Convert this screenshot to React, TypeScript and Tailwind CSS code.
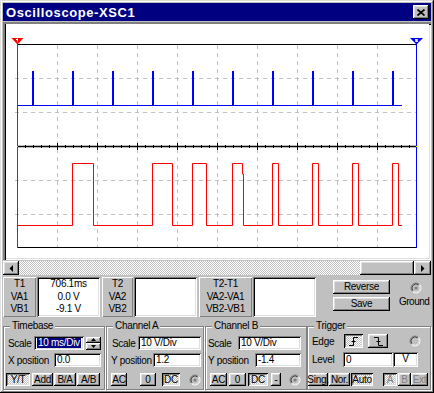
import React from "react";

const raised =
  "bg-[#c0c0c0] shadow-[inset_-1px_-1px_#000,inset_1px_1px_#fff,inset_-2px_-2px_#808080,inset_2px_2px_#dfdfdf]";
const pressed =
  "bg-[image:repeating-conic-gradient(#fff_0_25%,#c0c0c0_0_50%)] bg-[length:2px_2px] shadow-[inset_1px_1px_#000,inset_-1px_-1px_#fff,inset_2px_2px_#808080,inset_-2px_-2px_#dfdfdf]";
const field =
  "bg-white shadow-[inset_1px_1px_#808080,inset_-1px_-1px_#fff,inset_2px_2px_#000,inset_-2px_-2px_#dfdfdf]";
const labelBox =
  "bg-[#c0c0c0] shadow-[inset_1px_1px_#fff,inset_-1px_-1px_#808080]";

const vGrid = [57, 97, 137, 177, 217, 257, 297, 337, 377];
const hGrid = [78, 112, 180, 214];
const ticks = Array.from({ length: 49 }, (_, i) => 25 + i * 8);
const spikes = Array.from({ length: 10 }, (_, i) => 32 + i * 40);
const redTrace =
  "M17 225.5H72.5V163.5H93.5V225.5H152.5V163.5H172.5V225.5H192.5V163.5H206.5V225.5H232.5V163.5H242.5V174H243.5V225.5H272.5V163.5H278.5V225.5H312.5V163.5H318.5V225.5H352.5V163.5H358.5V225.5H392.5V163.5H398.5V225.5H402";

function Btn({
  label,
  className = "",
  on = false,
  dim = false,
}: {
  label: React.ReactNode;
  className?: string;
  on?: boolean;
  dim?: boolean;
}) {
  return (
    <button
      type="button"
      className={`h-[13px] shrink-0 flex items-center justify-center leading-none ${
        on ? pressed : raised
      } ${dim ? "text-[#808080]" : "text-black"} ${className}`}
    >
      {label}
    </button>
  );
}

function Radio({ dot = true }: { dot?: boolean }) {
  return (
    <svg width="12" height="12" viewBox="0 0 12 12" className="block shrink-0">
      <circle cx="6" cy="6" r="5" fill="#c0c0c0" />
      <path d="M2.46 9.54A5 5 0 0 1 9.54 2.46" fill="none" stroke="#808080" />
      <path d="M9.54 2.46A5 5 0 0 1 2.46 9.54" fill="none" stroke="#fff" />
      <path d="M3.17 8.83A4 4 0 0 1 8.83 3.17" fill="none" stroke="#404040" />
      <path d="M8.83 3.17A4 4 0 0 1 3.17 8.83" fill="none" stroke="#dfdfdf" />
      {dot && <circle cx="6" cy="6" r="1.6" fill="#808080" />}
    </svg>
  );
}

function Field({
  value,
  className = "",
  selected = false,
}: {
  value: string;
  className?: string;
  selected?: boolean;
}) {
  return (
    <div className={`h-[14px] shrink-0 flex items-center pl-[3px] ${field} ${className}`}>
      {selected ? (
        <span className="bg-[#000080] text-white px-[1px] leading-[10px]">{value}</span>
      ) : (
        <span className="leading-none">{value}</span>
      )}
    </div>
  );
}

function Measure({ lines, className }: { lines: string[]; className: string }) {
  return (
    <div className={`h-full shrink-0 flex flex-col items-center pt-[1px] ${labelBox} ${className}`}>
      {lines.map((l) => (
        <span key={l} className="leading-[12.5px]">
          {l}
        </span>
      ))}
    </div>
  );
}

function Value({ lines = [], className }: { lines?: string[]; className: string }) {
  return (
    <div className={`h-full shrink-0 flex flex-col items-center pt-[1px] ${field} ${className}`}>
      {lines.map((l) => (
        <span key={l} className="leading-[12.5px]">
          {l}
        </span>
      ))}
    </div>
  );
}

function Group({
  title,
  className,
  children,
}: {
  title: string;
  className: string;
  children: React.ReactNode;
}) {
  return (
    <fieldset
      className={`h-[71px] shrink-0 border border-[#808080] shadow-[1px_1px_0_#fff,inset_1px_1px_0_#fff] ${className}`}
    >
      <legend className="ml-[6px] px-[2px] leading-[14px] bg-[#c0c0c0]">{title}</legend>
      {children}
    </fieldset>
  );
}

function Scope() {
  return (
    <svg width="423" height="234" viewBox="6 24 423 234" className="block">
      <rect x="6" y="24" width="423" height="234" fill="#fff" />
      {vGrid.map((x) => (
        <line key={x} x1={x + 0.5} y1={45} x2={x + 0.5} y2={247} stroke="#c0c0c0" strokeDasharray="4 4" />
      ))}
      {hGrid.map((y) => (
        <line key={y} x1={15} y1={y + 0.5} x2={417} y2={y + 0.5} stroke="#c0c0c0" strokeDasharray="4 4" />
      ))}
      <line x1="17" y1="44.5" x2="416" y2="44.5" stroke="#000" />
      <line x1="17" y1="247.5" x2="416" y2="247.5" stroke="#000" />
      <line x1="17" y1="146.5" x2="416" y2="146.5" stroke="#000" strokeWidth="1.4" />
      {ticks.map((x) => {
        const major = (x - 17) % 40 === 0;
        return (
          <line
            key={x}
            x1={x + 0.5}
            y1={major ? 143 : 145}
            x2={x + 0.5}
            y2={major ? 150 : 148}
            stroke="#000"
          />
        );
      })}
      {/* channel A */}
      <line x1="17" y1="105.5" x2="402" y2="105.5" stroke="#0000ff" />
      {spikes.map((x) => (
        <rect key={x} x={x} y={71} width="2" height="34" fill="#0000ff" />
      ))}
      {/* channel B */}
      <path d={redTrace} fill="none" stroke="#ff0000" />
      {/* cursors */}
      <line x1="17.5" y1="38" x2="17.5" y2="248" stroke="#ff0000" />
      <polygon points="11.5,38 23.5,38 17.5,44.5" fill="#ff0000" />
      <rect x="17" y="38.5" width="1" height="3" fill="#fff" />
      <rect x="16" y="39" width="1" height="1" fill="#fff" />
      <line x1="416.5" y1="38" x2="416.5" y2="248" stroke="#0000ff" />
      <polygon points="410,38 423,38 416.5,44.5" fill="#0000ff" />
      <path d="M415 39.5H417.5V40.5H415.5V41.5H418" fill="none" stroke="#fff" strokeWidth="0.9" />
      <rect x="416" y="146" width="1" height="1" fill="#ffff00" />
      <rect x="17" y="146" width="1" height="1" fill="#00ffff" />
    </svg>
  );
}

export default function App() {
  return (
    <div className="w-[434px] h-[393px] bg-[#c0c0c0] p-[3px] flex flex-col text-[10px] tracking-[-0.3px] text-black font-['Liberation_Sans',Arial,sans-serif] shadow-[inset_-1px_-1px_#000,inset_1px_1px_#dfdfdf,inset_-2px_-2px_#808080,inset_2px_2px_#fff] overflow-hidden">
      {/* title bar */}
      <div className="h-[18px] shrink-0 bg-[#000080] flex items-center justify-between pl-[3px] pr-[2px]">
        <span className="text-white font-bold text-[13px] tracking-[0.6px] leading-none">
          Oscilloscope-XSC1
        </span>
        <button type="button" className={`w-[16px] h-[14px] flex items-center justify-center ${raised}`}>
          <svg width="8" height="7" viewBox="0 0 8 7">
            <path d="M0.5 0.5L7.5 6.5M7.5 0.5L0.5 6.5" stroke="#000" strokeWidth="1.7" />
          </svg>
        </button>
      </div>

      {/* screen */}
      <div className="mt-[1px] h-[238px] shrink-0 pl-[3px] pt-[2px] pr-[2px] pb-[2px] bg-white shadow-[inset_1px_1px_#808080,inset_2px_2px_#808080,inset_3px_3px_#000,inset_-1px_-1px_#fff,inset_-2px_-2px_#dfdfdf]">
        <Scope />
      </div>

      {/* scroll bar */}
      <div className="mt-[1px] h-[14px] shrink-0 flex">
        <div className={`w-[16px] h-full flex items-center justify-center ${raised}`}>
          <svg width="4" height="7" viewBox="0 0 4 7">
            <path d="M4 0V7L0.5 3.5Z" fill="#000" />
          </svg>
        </div>
        <div className="flex-1 bg-[image:repeating-conic-gradient(#fff_0_25%,#c0c0c0_0_50%)] bg-[length:2px_2px]" />
        <div className={`w-[54px] h-full ${raised}`} />
        <div className={`w-[17px] h-full flex items-center justify-center ${raised}`}>
          <svg width="4" height="7" viewBox="0 0 4 7">
            <path d="M0 0V7L3.5 3.5Z" fill="#000" />
          </svg>
        </div>
      </div>

      {/* readouts */}
      <div className="mt-[2px] h-[40px] shrink-0 flex">
        <Measure lines={["T1", "VA1", "VB1"]} className="w-[33px]" />
        <Value lines={["706.1ms", "0.0 V", "-9.1 V"]} className="w-[63px] ml-[1px]" />
        <Measure lines={["T2", "VA2", "VB2"]} className="w-[31px] ml-[2px]" />
        <Value className="w-[63px] ml-[1px]" />
        <Measure lines={["T2-T1", "VA2-VA1", "VB2-VB1"]} className="w-[53px] ml-[2px]" />
        <Value className="w-[63px] ml-[1px]" />
        <div className="w-[57px] ml-[17px] flex flex-col pt-[3px] gap-[3px]">
          <Btn label="Reverse" className="h-[14px] w-full" />
          <Btn label="Save" className="h-[14px] w-full" />
        </div>
        <div className="flex flex-col items-start ml-[4px] pt-[5px]">
          <div className="ml-[16px]">
            <Radio />
          </div>
          <span className="ml-[5px] mt-[2px] leading-[12px] tracking-[-0.5px]">Ground</span>
        </div>
      </div>

      {/* controls */}
      <div className="mt-[2px] flex">
        <Group title="Timebase" className="w-[102px]">
          <div className="flex flex-col pl-[4px] pr-[3px] pt-[3px]">
            <div className="h-[14px] flex items-center justify-between">
              <span>Scale</span>
              <div className="flex items-center">
                <Field value="10 ms/Div" selected className="w-[50px]" />
                <div className="ml-[2px] w-[15px] h-[13px] flex flex-col">
                  <div className={`h-[6.5px] flex items-center justify-center ${raised}`}>
                    <svg width="5" height="3" viewBox="0 0 5 3">
                      <path d="M0 3H5L2.5 0Z" fill="#000" />
                    </svg>
                  </div>
                  <div className={`h-[6.5px] flex items-center justify-center ${raised}`}>
                    <svg width="5" height="3" viewBox="0 0 5 3">
                      <path d="M0 0H5L2.5 3Z" fill="#000" />
                    </svg>
                  </div>
                </div>
              </div>
            </div>
            <div className="mt-[3px] h-[14px] flex items-center justify-between">
              <span>X position</span>
              <Field value="0.0" className="w-[47px]" />
            </div>
          </div>
          <div className="mt-[6px] flex pl-[2px]">
            <Btn label="Y/T" on className="w-[24px]" />
            <Btn label="Add" className="w-[21px] ml-[2px]" />
            <Btn label="B/A" className="w-[22px] ml-[1px]" />
            <Btn label="A/B" className="w-[23px] ml-[1px]" />
          </div>
        </Group>

        <Group title="Channel A" className="w-[98px] ml-[1px]">
          <div className="flex flex-col pl-[5px] pr-[2px] pt-[3px]">
            <div className="h-[14px] flex items-center justify-between">
              <span>Scale</span>
              <Field value="10 V/Div" className="w-[63px]" />
            </div>
            <div className="mt-[3px] h-[14px] flex items-center justify-between -ml-[1px]">
              <span>Y position</span>
              <Field value="1.2" className="w-[48px]" />
            </div>
          </div>
          <div className="mt-[6px] flex items-center pl-[4px]">
            <Btn label="AC" className="w-[16px]" />
            <Btn label="0" className="w-[16px] ml-[13px]" />
            <Btn label="DC" on className="w-[18px] ml-[6px]" />
            <div className="ml-[9px]">
              <Radio />
            </div>
          </div>
        </Group>

        <Group title="Channel B" className="w-[102px] ml-[1px]">
          <div className="flex flex-col pl-[2px] pr-[5px] pt-[3px]">
            <div className="h-[14px] flex items-center justify-between">
              <span>Scale</span>
              <Field value="10 V/Div" className="w-[63px]" />
            </div>
            <div className="mt-[3px] h-[14px] flex items-center justify-between">
              <span>Y position</span>
              <Field value="-1.4" className="w-[46px]" />
            </div>
          </div>
          <div className="mt-[6px] flex items-center pl-[4px]">
            <Btn label="AC" className="w-[17px]" />
            <Btn label="0" className="w-[17px] ml-[2px]" />
            <Btn label="DC" on className="w-[20px] ml-[2px]" />
            <Btn label="-" className="w-[10px] ml-[3px]" />
            <div className="ml-[8px]">
              <Radio />
            </div>
          </div>
        </Group>

        <Group title="Trigger" className="w-[124px]">
          <div className="flex flex-col pt-[1px]">
            <div className="h-[14px] flex items-center pl-[4px]">
              <span className="w-[32px]">Edge</span>
              <button type="button" className={`w-[19px] h-[14px] flex items-center justify-center ${pressed}`}>
                <svg width="11" height="9" viewBox="0 0 11 9">
                  <path d="M1 8.5H5.5V0.5H10" fill="none" stroke="#000" />
                  <path d="M3.5 4.5H7.5" fill="none" stroke="#000" />
                </svg>
              </button>
              <button type="button" className={`w-[20px] h-[14px] ml-[5px] flex items-center justify-center ${raised}`}>
                <svg width="11" height="9" viewBox="0 0 11 9">
                  <path d="M1 0.5H5.5V8.5H10" fill="none" stroke="#000" />
                  <path d="M3.5 4.5H7.5" fill="none" stroke="#000" />
                </svg>
              </button>
              <div className="ml-[21px]">
                <Radio dot={false} />
              </div>
            </div>
            <div className="mt-[4px] h-[15px] flex items-center pl-[4px]">
              <span className="w-[31px]">Level</span>
              <Field value="0" className="w-[50px] h-[15px]" />
              <div className={`w-[25px] h-[15px] flex justify-center pt-[1px] ${field}`}>
                <span className="leading-[11px]">V</span>
              </div>
            </div>
            <div className="mt-[6px] flex">
              <Btn label="Sing." className="w-[20px]" />
              <Btn label="Nor." className="w-[21px] ml-[1px]" />
              <Btn label="Auto" on className="w-[22px] ml-[1px]" />
              <Btn label="A" on dim className="w-[14px] ml-[10px]" />
              <Btn label="B" dim className="w-[13px] ml-[1px]" />
              <Btn label="Ext" dim className="w-[17px]" />
            </div>
          </div>
        </Group>
      </div>
    </div>
  );
}
